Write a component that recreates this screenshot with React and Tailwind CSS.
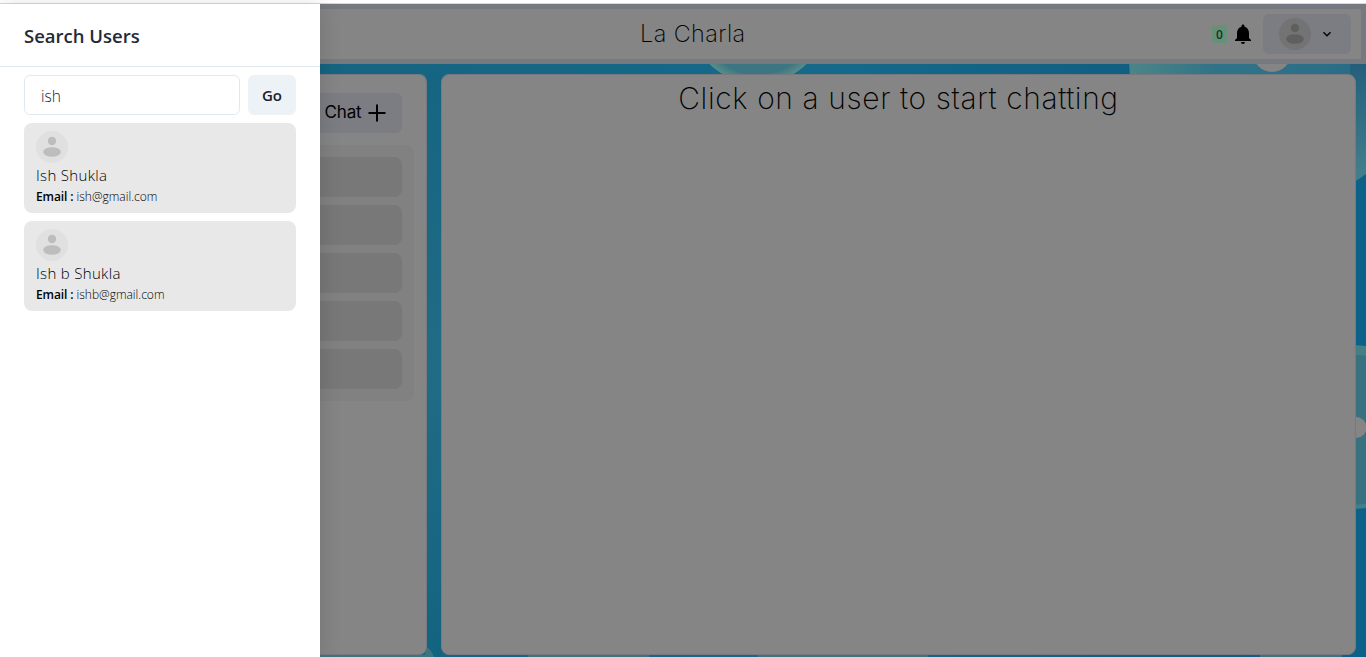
import React from "react";

function Avatar({ dark = false }) {
  return (
    <svg
      viewBox="0 0 32 32"
      className={dark ? "size-8 shrink-0 text-[#5f5f5f]" : "size-8 shrink-0 text-[#bdbdbd]"}
      fill="currentColor"
    >
      <circle cx="16" cy="16" r="16" fill={dark ? "#737373" : "#e0e0e0"} />
      <circle cx="16" cy="10" r="4.2" />
      <ellipse cx="16" cy="21" rx="8.8" ry="4.8" />
    </svg>
  );
}

function UserCard({ name, email }) {
  return (
    <div className="mb-2 h-[90px] rounded-lg bg-[#e8e8e8] px-3 pt-2 text-black">
      <Avatar />
      <p className="h-[25px] whitespace-nowrap text-[15px] font-light leading-6 tracking-[0.320px]">{name}</p>
      <p className="flex h-[18px] gap-[3px] whitespace-nowrap text-[12px] leading-[18px]">
        <b className="font-semibold tracking-[-0.1px]">Email :</b>
        <span className="font-light">{email}</span>
      </p>
    </div>
  );
}

function Drawer() {
  return (
    <aside className="relative z-10 flex w-80 shrink-0 flex-col bg-white shadow-[2px_0_20px_rgba(0,0,0,0.12)]">
      <header className="flex h-[63px] items-center border-b border-[#e2e8f0] px-6 pt-[2px]">
        <h2 className="whitespace-nowrap text-[18.500px] font-semibold text-[#242a36]">Search Users</h2>
      </header>
      <div className="flex flex-col px-6 pt-2">
        <div className="flex gap-2 pb-2">
          <input
            className="h-10 w-[216px] rounded-md border border-[#e2e8f0] px-4 pt-[2px] text-[15.5px] font-light text-[#1a202c] outline-none"
            defaultValue="ish"
            aria-label="Search"
          />
          <button className="h-10 w-12 rounded-md bg-[#edf2f7] text-[15px] font-semibold text-[#1a202c]">Go</button>
        </div>
        <UserCard name="Ish Shukla" email="ish@gmail.com" />
        <UserCard name="Ish b Shukla" email="ishb@gmail.com" />
      </div>
    </aside>
  );
}

function Backdrop() {
  return (
    <svg className="absolute inset-0 size-full" viewBox="320 4 1046 653" preserveAspectRatio="none">
      <defs>
        <linearGradient id="sea" x1="0" y1="0" x2="1" y2="0">
          <stop offset="0" stopColor="#156582" />
          <stop offset="0.5" stopColor="#15698a" />
          <stop offset="0.78" stopColor="#105f80" />
          <stop offset="1" stopColor="#0b6188" />
        </linearGradient>
        <linearGradient id="gutter" x1="0" y1="0" x2="0" y2="1">
          <stop offset="0" stopColor="#156582" />
          <stop offset="0.5" stopColor="#216b85" />
          <stop offset="1" stopColor="#136481" />
        </linearGradient>
        <linearGradient id="glass" x1="0" y1="0" x2="1" y2="0">
          <stop offset="0" stopColor="#4c8587" />
          <stop offset="0.35" stopColor="#317488" />
          <stop offset="1" stopColor="#2a6c86" />
        </linearGradient>
        <linearGradient id="edge" x1="0" y1="0" x2="0" y2="1">
          <stop offset="0" stopColor="#235f7b" />
          <stop offset="1" stopColor="#45818c" />
        </linearGradient>
        <radialGradient id="bubble">
          <stop offset="0" stopColor="#3c7683" />
          <stop offset="0.86" stopColor="#3c7683" />
          <stop offset="1" stopColor="#5c8e87" />
        </radialGradient>
      </defs>
      <rect x="320" y="4" width="1046" height="653" fill="url(#sea)" />
      <rect x="426" y="74" width="16" height="583" fill="url(#gutter)" />
      <circle cx="758" cy="15" r="69" fill="url(#bubble)" />
      <path d="M1129 60h237v18h-236z" fill="url(#glass)" />
      <path d="M1350 64h16v110l-16 11z" fill="url(#edge)" />
      <circle cx="1272" cy="53" r="19" fill="#858585" />
      <path d="M1350 345l16 1v162l-16 1z" fill="#38717f" />
      <path d="M1350 345l16 1v10l-16-2zM1350 505l16-1v4l-16 1z" fill="#438086" />
      <circle cx="1356" cy="427.500" r="10.500" fill="#858585" />
      <path d="M320 655h105l2-8q5 4 7 10H320zM527 654h122v3H528zM758 654h170v3H758zM1260 654h82v3h-82z" fill="#3c7581" />
    </svg>
  );
}

function TopBar() {
  return (
    <header className="flex h-[60px] shrink-0 items-center border-y-[5px] border-r-[5px] border-[#767a80] bg-[#858585] pr-[10px]">
      <h1 className="ml-[320px] w-[110px] whitespace-nowrap font-['Inter'] text-[23.500px] font-extralight tracking-[0.400px] text-black">
        La Charla
      </h1>
      <div className="ml-auto flex items-center">
        <span className="flex h-[18px] w-[15px] items-center justify-center rounded-[2px] bg-[#679079] pt-[1px] text-[12px] font-semibold text-[#123524]">
          0
        </span>
        <svg viewBox="0 0 24 24" className="ml-1 size-6" fill="currentColor">
          <path d="M12 22c1.100 0 2-.9 2-2h-4c0 1.100.89 2 2 2zm6-6v-5c0-3.070-1.640-5.640-4.500-6.320V4c0-.83-.67-1.500-1.500-1.500s-1.500.67-1.500 1.500v.68C7.630 5.360 6 7.920 6 11v5l-2 2v1h16v-1l-2-2z" />
        </svg>
        <button className="ml-2 flex h-10 w-[88px] items-center rounded-md bg-[#7b7d83] pl-4">
          <Avatar dark />
          <svg viewBox="0 0 24 24" className="ml-2 size-4" fill="currentColor">
            <path d="M16.590 8.590L12 13.170 7.410 8.590 6 10l6 6 6-6z" />
          </svg>
        </button>
      </div>
    </header>
  );
}

function ChatList() {
  return (
    <section className="flex w-[107px] shrink-0 flex-col rounded-r-lg border-y border-r border-[#76797f] bg-[#858585] pt-[18px]">
      <button className="flex h-10 w-[82px] items-center rounded-r-md bg-[#7b7d83] pl-[3px]">
        <span className="w-[40px] whitespace-nowrap font-['Inter'] text-[17px] font-normal tracking-[-0.2px]">Chat</span>
        <svg viewBox="0 0 18 18" className="ml-[5px] size-[18px]" stroke="currentColor" strokeWidth="2">
          <path d="M9 .5v17M.5 9h17" />
        </svg>
      </button>
      <div className="mt-3 flex h-[256px] w-[94px] flex-col gap-2 rounded-r-lg bg-[#818181] pt-3">
        {[0, 1, 2, 3, 4].map((row) => (
          <div key={row} className="h-10 w-[82px] rounded-r-lg bg-[#787878]" />
        ))}
      </div>
    </section>
  );
}

export default function App() {
  return (
    <div className="flex h-[657px] w-[1366px] flex-col overflow-hidden bg-white font-['Open_Sans',sans-serif] text-black">
      <div className="h-1 shrink-0 border-b border-[#d6d8db]" />
      <div className="flex min-h-0 flex-1">
        <Drawer />
        <div className="relative flex-1">
          <Backdrop />
          <div className="relative flex h-full flex-col">
            <TopBar />
            <main className="flex min-h-0 flex-1 gap-[14px] pb-[2px] pr-[10px] pt-[10px]">
              <ChatList />
              <section className="flex-1 rounded-lg border border-[#76797f] bg-[#858585] pt-[1px] text-center">
                <p className="whitespace-nowrap font-['Inter'] text-[30px] font-extralight leading-[45px] tracking-[0.600px]">
                  Click on a user to start chatting
                </p>
              </section>
            </main>
          </div>
        </div>
      </div>
    </div>
  );
}
